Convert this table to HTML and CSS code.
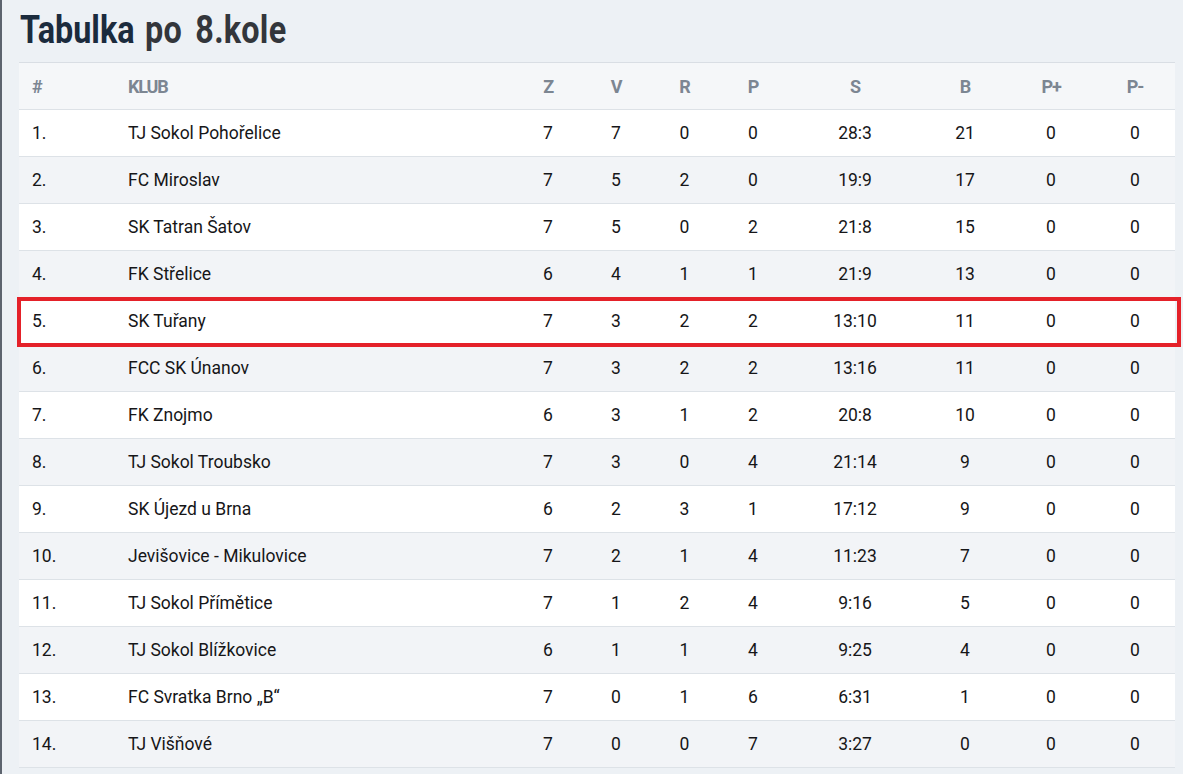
FILE: index.html
```html
<!DOCTYPE html>
<html lang="cs">
<head>
<meta charset="utf-8">
<title>Tabulka po 8.kole</title>
<link rel="stylesheet" href="styles.css">
</head>
<body>
<div class="page">
  <h1 class="title"><span class="title-inner"><span class="title-main">Tabulka</span> <span class="title-sub">po 8.kole</span></span></h1>
  <div class="table-wrap">
    <table class="standings">
      <colgroup>
        <col class="c-pos"><col class="c-club"><col class="c-n"><col class="c-n"><col class="c-r"><col class="c-n"><col class="c-s"><col class="c-b"><col class="c-pp"><col class="c-pm">
      </colgroup>
      <thead>
        <tr><th class="l">#</th><th class="l">KLUB</th><th>Z</th><th>V</th><th>R</th><th>P</th><th>S</th><th>B</th><th>P+</th><th>P-</th></tr>
      </thead>
      <tbody>
        <tr><td class="l">1.</td><td class="l">TJ Sokol Pohořelice</td><td>7</td><td>7</td><td>0</td><td>0</td><td>28:3</td><td>21</td><td>0</td><td>0</td></tr>
        <tr><td class="l">2.</td><td class="l">FC Miroslav</td><td>7</td><td>5</td><td>2</td><td>0</td><td>19:9</td><td>17</td><td>0</td><td>0</td></tr>
        <tr><td class="l">3.</td><td class="l">SK Tatran Šatov</td><td>7</td><td>5</td><td>0</td><td>2</td><td>21:8</td><td>15</td><td>0</td><td>0</td></tr>
        <tr><td class="l">4.</td><td class="l">FK Střelice</td><td>6</td><td>4</td><td>1</td><td>1</td><td>21:9</td><td>13</td><td>0</td><td>0</td></tr>
        <tr class="hl"><td class="l">5.</td><td class="l">SK Tuřany</td><td>7</td><td>3</td><td>2</td><td>2</td><td>13:10</td><td>11</td><td>0</td><td>0</td></tr>
        <tr><td class="l">6.</td><td class="l">FCC SK Únanov</td><td>7</td><td>3</td><td>2</td><td>2</td><td>13:16</td><td>11</td><td>0</td><td>0</td></tr>
        <tr><td class="l">7.</td><td class="l">FK Znojmo</td><td>6</td><td>3</td><td>1</td><td>2</td><td>20:8</td><td>10</td><td>0</td><td>0</td></tr>
        <tr><td class="l">8.</td><td class="l">TJ Sokol Troubsko</td><td>7</td><td>3</td><td>0</td><td>4</td><td>21:14</td><td>9</td><td>0</td><td>0</td></tr>
        <tr><td class="l">9.</td><td class="l">SK Újezd u Brna</td><td>6</td><td>2</td><td>3</td><td>1</td><td>17:12</td><td>9</td><td>0</td><td>0</td></tr>
        <tr><td class="l">10.</td><td class="l">Jevišovice - Mikulovice</td><td>7</td><td>2</td><td>1</td><td>4</td><td>11:23</td><td>7</td><td>0</td><td>0</td></tr>
        <tr><td class="l">11.</td><td class="l">TJ Sokol Přímětice</td><td>7</td><td>1</td><td>2</td><td>4</td><td>9:16</td><td>5</td><td>0</td><td>0</td></tr>
        <tr><td class="l">12.</td><td class="l">TJ Sokol Blížkovice</td><td>6</td><td>1</td><td>1</td><td>4</td><td>9:25</td><td>4</td><td>0</td><td>0</td></tr>
        <tr><td class="l">13.</td><td class="l">FC Svratka Brno „B“</td><td>7</td><td>0</td><td>1</td><td>6</td><td>6:31</td><td>1</td><td>0</td><td>0</td></tr>
        <tr><td class="l">14.</td><td class="l">TJ Višňové</td><td>7</td><td>0</td><td>0</td><td>7</td><td>3:27</td><td>0</td><td>0</td><td>0</td></tr>
      </tbody>
    </table>
    <div class="highlight-box"></div>
  </div>
</div>
</body>
</html>
```

FILE: styles.css
```css
html, body {
  margin: 0;
  padding: 0;
}
body {
  background: #edf1f5;
  border-left: 2px solid #5d646e;
  min-height: 774px;
  box-sizing: border-box;
  font-family: Roboto, "Liberation Sans", sans-serif;
  overflow: hidden;
}
.page {
  padding: 0 0 0 17px;
}
.title {
  margin: 0;
  padding: 8px 0 0 1px;
  height: 62px;
  box-sizing: border-box;
  font-size: 39px;
  font-weight: 700;
  line-height: 44px;
  white-space: nowrap;
}
.title-inner {
  display: inline-block;
  transform: scaleX(0.83);
  transform-origin: left center;
}
.title-main {
  color: #1b2b3d;
}
.title-sub {
  color: #33363b;
  margin-left: 3px;
  letter-spacing: 0.3px;
  word-spacing: 6px;
}
.table-wrap {
  position: relative;
  width: 1156px;
}
.standings {
  width: 1156px;
  table-layout: fixed;
  border-collapse: collapse;
  border-top: 1px solid #d9dee4;
  background: #fff;
}
.c-pos { width: 109px; }
.c-club { width: 386px; }
.c-n { width: 68px; }
.c-r { width: 69px; }
.c-s { width: 136px; }
.c-b { width: 84px; }
.c-pp { width: 88px; }
.c-pm { width: 80px; }
.standings th,
.standings td {
  height: 47px;
  padding: 0;
  text-align: center;
  border-bottom: 1px solid #dde2e7;
  box-sizing: border-box;
}
.standings th {
  background: #f5f7f9;
  color: #7c8692;
  font-size: 18px;
  font-weight: 700;
  letter-spacing: -1.2px;
}
.standings td {
  color: #161618;
  font-size: 17.5px;
  font-weight: 400;
}
.standings .l {
  text-align: left;
}
.standings th.l:first-child,
.standings td.l:first-child {
  padding-left: 13px;
}
.standings tbody tr:nth-child(even) td {
  background: #f2f4f7;
}
.standings tbody tr.hl td {
  background: #fff;
}
.highlight-box {
  position: absolute;
  left: -2px;
  top: 235px;
  width: 1164px;
  height: 50px;
  border: 4px solid #e42129;
  box-sizing: border-box;
  pointer-events: none;
}
```
